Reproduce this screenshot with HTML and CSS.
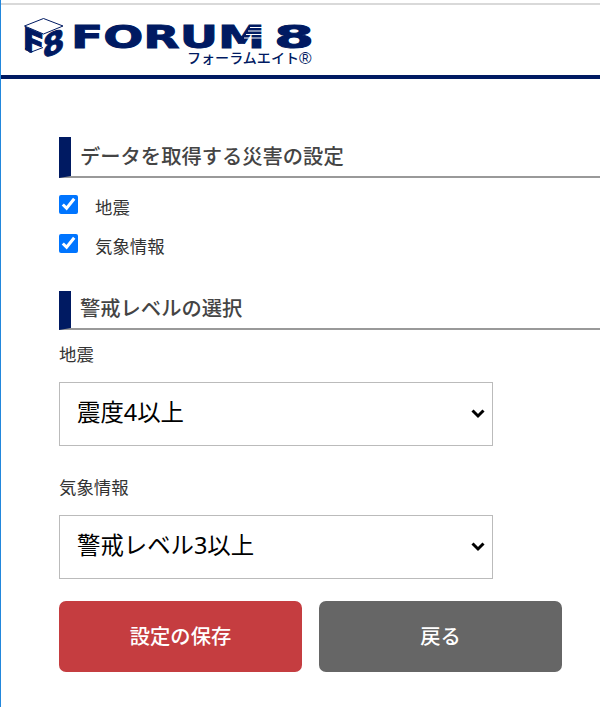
FILE: index.html
```html
<!DOCTYPE html>
<html lang="ja">
<head>
  <meta charset="UTF-8">
  <meta name="viewport" content="width=device-width, initial-scale=1.0">
  <title>FORUM 8</title>
  <link rel="stylesheet" href="styles.css">
</head>
<body>
  <header>
    <svg class="logo" width="300" height="60" viewBox="0 0 300 60" role="img" aria-label="FORUM 8">
      <!-- cube -->
      <path class="cube-top" d="M5.5 13 L24.5 5.5 L44 13 L24.5 21 Z"/>
      <path class="cube-side" d="M6 35 L11 39.5 L24 34.5"/>
      <g class="cube-text">
        <text transform="matrix(1 .42 0 1.03 3.5 35.5)" textLength="22" lengthAdjust="spacingAndGlyphs">F</text>
        <text transform="matrix(1 -.42 0 1.03 23.5 46)" textLength="22" lengthAdjust="spacingAndGlyphs">8</text>
      </g>
      <g class="logo-text">
        <text x="52" y="35" textLength="194" lengthAdjust="spacingAndGlyphs">FORUM</text>
        <text x="255" y="35" textLength="40" lengthAdjust="spacingAndGlyphs">8</text>
      </g>
      <path class="stripes" d="M231 14.5h15M229 18h17M227 21.5h19M225 25h21"/>
      <text class="logo-kana" x="168" y="50" textLength="112" lengthAdjust="spacingAndGlyphs">フォーラムエイト</text>
      <text class="logo-mark" x="280" y="51">®</text>
    </svg>
  </header>

  <main>
    <h2>データを取得する災害の設定</h2>
    <label class="check"><input type="checkbox" checked><span>地震</span></label>
    <label class="check"><input type="checkbox" checked><span>気象情報</span></label>

    <h2 class="level">警戒レベルの選択</h2>
    <label class="caption" for="quake">地震</label>
    <div class="select">
      <select id="quake">
        <option>震度4以上</option>
      </select>
      <svg width="14" height="10" viewBox="0 0 14 10"><path d="M1.5 1.5 L7 7 L12.5 1.5"/></svg>
    </div>
    <label class="caption" for="weather">気象情報</label>
    <div class="select">
      <select id="weather">
        <option>警戒レベル3以上</option>
      </select>
      <svg width="14" height="10" viewBox="0 0 14 10"><path d="M1.5 1.5 L7 7 L12.5 1.5"/></svg>
    </div>

    <div class="buttons">
      <button class="save">設定の保存</button>
      <button class="back">戻る</button>
    </div>
  </main>
</body>
</html>
```
FILE: styles.css
```css
* {
  box-sizing: border-box;
}

body {
  margin: 0;
  min-height: 707px;
  border-left: 1px solid #2287dc;
  background: #fff;
  color: #333;
  font-family: "Noto Sans", "Noto Sans CJK JP", sans-serif;
  overflow: hidden;
}

header {
  height: 79px;
  padding: 9px 0 0 18px;
  border-top: 1px solid #fff;
  border-bottom: 4px solid #001a62;
  background: linear-gradient(#fff 2px, #d9d9d9 2px, #d9d9d9 4px, #fff 4px);
}

.logo {
  display: block;
  margin-top: 3px;
  fill: #001a62;
}

.cube-top,
.cube-side {
  fill: none;
  stroke: #001a62;
  stroke-width: 1;
}

.cube-text {
  font: bold 30px "DejaVu Sans", sans-serif;
  stroke: #001a62;
  stroke-width: 0.9;
}

.logo-text {
  font: bold 32px "DejaVu Sans", sans-serif;
  stroke: #001a62;
  stroke-width: 0.9;
}

.logo-kana {
  font: 500 13.5px "Noto Sans CJK JP", sans-serif;
}

.logo-mark {
  font: 17px "Liberation Sans", sans-serif;
}

.stripes {
  stroke: #fff;
  stroke-width: 1;
}

main {
  padding: 58px 0 0 58px;
}

h2 {
  height: 41px;
  margin: 0;
  padding-left: 9px;
  border-left: 12px solid #001a62;
  border-bottom: 2px solid #999;
  color: #444;
  font-family: "Noto Sans CJK JP", sans-serif;
  font-size: 20.3px;
  font-weight: 500;
  line-height: 36px;
}

.check {
  display: flex;
  align-items: center;
  height: 39px;
  font-size: 17.4px;
}

h2 + .check {
  margin-top: 7px;
}

.check input {
  width: 19px;
  height: 19px;
  margin: 0 17px 0 0;
  accent-color: #0075ff;
}

.check span {
  padding-top: 3px;
}

.level {
  height: 39px;
  margin-top: 28px;
  line-height: 32px;
}

.caption {
  display: block;
  height: 52px;
  font-size: 17.4px;
  line-height: 48px;
}

.select {
  position: relative;
  width: 434px;
  height: 64px;
  margin-bottom: 17px;
}

select {
  width: 100%;
  height: 100%;
  padding: 0 17px 4px;
  border: 1.5px solid #bbb;
  border-radius: 0;
  background: #fff;
  color: #000;
  font: 23.4px "Noto Sans", "Noto Sans CJK JP", sans-serif;
  appearance: none;
}

.select svg {
  position: absolute;
  right: 8px;
  top: 27px;
  fill: none;
  stroke: #000;
  stroke-width: 3;
}

.buttons {
  display: flex;
  gap: 17px;
  margin-top: 22px;
}

button {
  width: 243px;
  height: 71px;
  padding: 0 0 4px;
  border: none;
  border-radius: 7px;
  color: #fff;
  font: 500 20.3px "Noto Sans CJK JP", sans-serif;
}

.save {
  background: #c53d40;
}

.back {
  background: #666;
}
```
